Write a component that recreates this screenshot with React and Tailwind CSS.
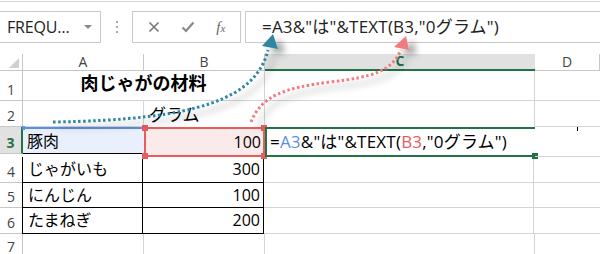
import React from "react";

const ui = { fontFamily: '"Open Sans", "Noto Sans CJK JP", sans-serif' };
const jp = { fontFamily: '"Open Sans", "Noto Sans CJK JP", sans-serif' };

const cols = [
    { key: "A", w: "w-[121px]" },
    { key: "B", w: "w-[121px]" },
    { key: "C", w: "w-[270px]" },
    { key: "D", w: "flex-1" },
];

const rowHeights = ["h-[30px]", "h-[26px]", "h-[27px]", "h-[26px]", "h-[25px]", "h-[26px]", "h-[24px]"];

const items = [
    ["じゃがいも", "300"],
    ["にんじん", "100"],
    ["たまねぎ", "200"],
];

const Formula = () => (
    <span>
        =<span className="text-[#5b8ee6]">A3</span>&"は"&TEXT(<span className="text-[#e85c5c]">B3</span>,"0グラム")
    </span>
);

const FormulaBar = () => (
    <div className="h-[53px] border-t border-[#d6d6d6] mt-[1px] flex items-start pt-[9px] text-[#222]" style={ui}>
        <div className="w-[101px] h-[32px] border border-l-0 border-[#c9c9c9] flex items-center pl-[7px] pr-[8px] justify-between">
            <span className="text-[16px] tracking-[-0.2px]">FREQU…</span>
            <span className="w-0 h-0 border-l-[4px] border-r-[4px] border-t-[4px] border-l-transparent border-r-transparent border-t-[#888]" />
        </div>
        <div className="w-[31px] h-[32px] flex flex-col items-center justify-center gap-[3px]">
            <span className="w-[2px] h-[2px] bg-[#aaa]" />
            <span className="w-[2px] h-[2px] bg-[#aaa]" />
            <span className="w-[2px] h-[2px] bg-[#aaa]" />
        </div>
        <div className="w-[109px] h-[32px] border border-[#c9c9c9] flex items-center justify-around px-[4px]">
            <svg width="12" height="12" viewBox="0 0 12 12">
                <path d="M1.5 1.5 L10.5 10.5 M10.5 1.5 L1.5 10.5" stroke="#777" strokeWidth="1.6" />
            </svg>
            <svg width="14" height="12" viewBox="0 0 14 12">
                <path d="M1.5 6.5 L5 10 L12.5 1.5" stroke="#888" strokeWidth="2.2" fill="none" />
            </svg>
            <span className="text-[#666] italic text-[15px]" style={{ fontFamily: '"Liberation Serif", serif' }}>
                f<span className="text-[11px]">x</span>
            </span>
        </div>
        <div className="ml-[4px] flex-1 h-[32px] border border-r-0 border-[#c9c9c9] flex items-center pl-[16px] overflow-hidden whitespace-nowrap">
            <div className="w-[243px] overflow-hidden text-[17px] tracking-[0.2px]" style={jp}>
                =A3&"は"&TEXT(B3,"0グラム")
            </div>
        </div>
    </div>
);

const Arrows = () => (
    <svg className="absolute left-0 top-0 pointer-events-none" width="600" height="254" viewBox="0 0 600 254">
        <defs>
            <filter id="sh" x="-20%" y="-20%" width="140%" height="140%">
                <feGaussianBlur in="SourceAlpha" stdDeviation="3.5" />
                <feOffset dx="7" dy="5" result="b" />
                <feComponentTransfer>
                    <feFuncA type="linear" slope="0.4" />
                </feComponentTransfer>
                <feMerge>
                    <feMergeNode />
                    <feMergeNode in="SourceGraphic" />
                </feMerge>
            </filter>
        </defs>
        <g filter="url(#sh)">
            <path d="M53 122 C 200 120, 256 98, 268 50" stroke="#2e86a0" strokeWidth="3" strokeDasharray="2.5 2.5" fill="none" />
            <path d="M273 34 L262 46 L278 49 Z" fill="#2e86a0" />
        </g>
        <g filter="url(#sh)">
            <path d="M251 122 C 262 95, 285 88, 330 82 C 375 77, 392 70, 401 50" stroke="#f07b80" strokeWidth="3" strokeDasharray="2.5 2.5" fill="none" />
            <path d="M406 36 L394 47 L409 50 Z" fill="#f07b80" />
        </g>
    </svg>
);

const Header = () => (
    <div className="flex h-[17px] text-[14px] text-[#444] leading-none" style={ui}>
        <div className="w-[23px] border-r border-b border-[#c6c6c6] relative">
            <svg className="absolute right-[3px] bottom-[2px]" width="10" height="10" viewBox="0 0 10 10">
                <path d="M10 0 L10 10 L0 10 Z" fill="#d0d0d0" />
            </svg>
        </div>
        {cols.map((c) =>
            c.key === "C" ? (
                <div key={c.key} className={`${c.w} bg-[#e1e1e1] border-b-2 border-[#217346] flex items-end justify-center pb-[1px] font-bold text-[#217346]`}>
                    C
                </div>
            ) : (
                <div key={c.key} className={`${c.w} border-r border-b border-[#c6c6c6] flex items-end justify-center pb-[1px]`}>
                    {c.key}
                </div>
            )
        )}
    </div>
);

const RowHead = ({ n, h, active }) =>
    active ? (
        <div className={`w-[23px] ${h} bg-[#e1e1e1] border-r-2 border-b border-r-[#217346] border-b-[#c6c6c6] flex items-end justify-center text-[14px] font-bold text-[#217346] leading-[20px]`} style={ui}>
            {n}
        </div>
    ) : (
        <div className={`w-[23px] ${h} border-r border-b border-[#c6c6c6] flex items-end justify-center text-[14px] text-[#444] leading-[20px]`} style={ui}>
            {n}
        </div>
    );

export default function App() {
    return (
        <div className="relative w-[600px] h-[254px] bg-white overflow-hidden text-black">
            <FormulaBar />
            <Header />

            {/* row 1 */}
            <div className="flex">
                <RowHead n="1" h={rowHeights[0]} />
                <div className="w-[242px] h-[30px] border-r border-b border-[#d4d4d4] flex items-end justify-center pb-[3px] text-[18px] font-bold" style={jp}>
                    肉じゃがの材料
                </div>
                <div className="w-[270px] border-r border-b border-[#d4d4d4]" />
                <div className="flex-1 border-b border-[#d4d4d4]" />
            </div>

            {/* row 2 */}
            <div className="flex">
                <RowHead n="2" h={rowHeights[1]} />
                <div className="w-[121px] h-[26px] border-r border-b border-[#d4d4d4]" />
                <div className="w-[121px] border-r border-[#d4d4d4] flex items-end pl-[5px] text-[17px]" style={jp}>
                    グラム
                </div>
                <div className="w-[270px] border-r border-[#d4d4d4]" />
                <div className="flex-1 border-b border-[#d4d4d4]" />
            </div>

            {/* row 3 */}
            <div className="flex">
                <RowHead n="3" h={rowHeights[2]} active />
                <div className="w-[121px] h-[27px] bg-[#e9f0fc] border-t-2 border-b border-[#5b8ee6] border-b-black flex items-center pl-[4px] text-[16px] relative" style={jp}>
                    豚肉
                    <span className="absolute left-[-1px] top-[-3px] w-[3px] h-[4px] bg-[#5b8ee6]" />
                </div>
                <div className="w-[121px] bg-[#fbeaea] border-2 border-[#e85c5c] flex items-center justify-end pr-[2px] text-[16px] relative" style={jp}>
                    100
                    <span className="absolute left-[-4px] top-[-4px] w-[6px] h-[6px] bg-[#e85c5c]" />
                    <span className="absolute right-[-4px] top-[-4px] w-[6px] h-[6px] bg-[#e85c5c]" />
                    <span className="absolute left-[-4px] bottom-[-4px] w-[6px] h-[6px] bg-[#e85c5c]" />
                    <span className="absolute right-[-4px] bottom-[-4px] w-[6px] h-[6px] bg-[#e85c5c]" />
                </div>
                <div className="w-[270px] border-t-2 border-b-2 border-l-2 border-[#217346] flex items-center pl-[3px] text-[17px] tracking-[0.2px] whitespace-nowrap relative" style={jp}>
                    <Formula />
                    <span className="absolute right-[-3px] bottom-[-4px] w-[6px] h-[6px] bg-[#217346]" />
                </div>
                <div className="flex-1 border-b border-[#d4d4d4] relative">
                    <span className="absolute left-[42px] top-[0px] w-[1px] h-[4px] bg-black" />
                </div>
            </div>

            {/* rows 4-6 */}
            {items.map(([name, qty], i) => (
                <div key={name} className="flex">
                    <RowHead n={String(i + 4)} h={rowHeights[i + 3]} />
                    <div className={`w-[121px] ${rowHeights[i + 3]} border-l border-r border-b border-black -ml-[1px] pl-[5px] flex items-center text-[16px]`} style={jp}>
                        {name}
                    </div>
                    <div className="w-[121px] border-r border-b border-black flex items-center justify-end pr-[3px] text-[16px]" style={jp}>
                        {qty}
                    </div>
                    <div className="w-[270px] border-r border-b border-[#d4d4d4]" />
                    <div className="flex-1 border-b border-[#d4d4d4]" />
                </div>
            ))}

            {/* row 7 */}
            <div className="flex">
                <RowHead n="7" h={rowHeights[6]} />
                <div className="w-[121px] h-[24px] border-r border-[#d4d4d4]" />
                <div className="w-[121px] border-r border-[#d4d4d4]" />
                <div className="w-[270px] border-r border-[#d4d4d4]" />
                <div className="flex-1" />
            </div>

            <Arrows />
        </div>
    );
}
